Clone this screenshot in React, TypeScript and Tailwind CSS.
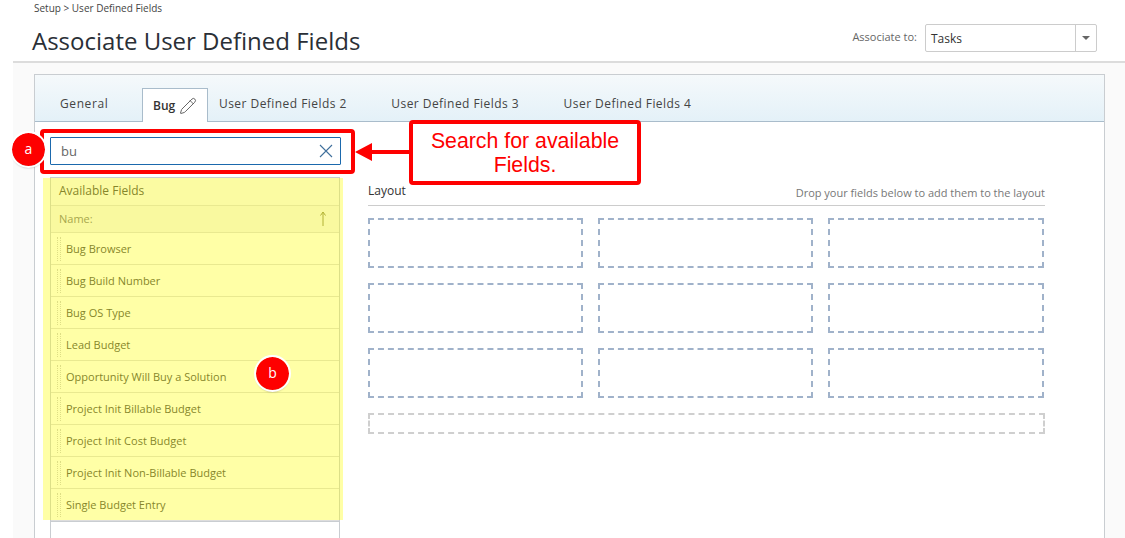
import { Pencil } from "lucide-react";

const FIELDS = [
  "Bug Browser",
  "Bug Build Number",
  "Bug OS Type",
  "Lead Budget",
  "Opportunity Will Buy a Solution",
  "Project Init Billable Budget",
  "Project Init Cost Budget",
  "Project Init Non-Billable Budget",
  "Single Budget Entry",
];

const TABS = ["User Defined Fields 2", "User Defined Fields 3", "User Defined Fields 4"];
const SLOTS = [0, 1, 2, 3, 4, 5, 6, 7, 8];

function Badge({ label, className }: { label: string; className: string }) {
  return (
    <div
      className={`absolute flex h-[33px] w-[33px] items-center justify-center rounded-full bg-[#fe0000] pb-[2px] text-[14px] text-white shadow-[0_2px_2px_rgba(0,0,0,0.3)] outline-2 outline-white ${className}`}
    >
      {label}
    </div>
  );
}

export default function App() {
  return (
    <div className="relative h-[538px] w-[1125px] overflow-hidden bg-white font-['Open_Sans',sans-serif] text-[#333]">
      <header className="ml-[13px] flex h-[63px] justify-between border-b-2 border-[#dcdcdc] pl-[19px] pr-[28px]">
        <div>
          <div className="ml-[2px] pt-[2px] text-[10px] leading-[13px] text-[#444]">Setup &gt; User Defined Fields</div>
          <h1 className="pt-[9px] text-[24px] leading-[33px] text-[#2a2f36]">Associate User Defined Fields</h1>
        </div>
        <div className="flex items-start pt-[24px]">
          <span className="mr-[8px] pt-[5px] text-[11px] leading-[15px] text-[#666]">Associate to:</span>
          <div className="flex h-[28px] w-[172px] rounded-[2px] border border-[#ccc] bg-white">
            <span className="flex-1 pl-[5px] pt-[5px] text-[12px] leading-[17px] text-[#333]">Tasks</span>
            <span className="flex w-[21px] items-center justify-center border-l border-[#ccc]">
              <span className="h-0 w-0 border-x-[4px] border-t-[4px] border-x-transparent border-t-[#666]" />
            </span>
          </div>
        </div>
      </header>

      <main className="ml-[13px] h-[475px] bg-[#fafafa] pl-[21px] pr-[20px] pt-[11px]">
        <div className="h-[470px] border border-[#c9cdd1] bg-white">
          <nav className="flex h-[47px] items-end border-b border-[#a9bccb] bg-gradient-to-b from-[#f5f9fb] to-[#e4f1f8] pl-[25px]">
            <span className="w-[82px] pb-[9px] text-[12px] leading-[17px] tracking-[0.6px] text-[#444]">General</span>
            <div className="relative top-px flex h-[34px] w-[66px] items-center gap-[4px] border border-b-0 border-[#a9bccb] bg-white pl-[10px]">
              <span className="text-[12px] font-semibold leading-[17px] text-[#333]">Bug</span>
              <Pencil size={18} strokeWidth={1.2} className="text-[#555]" />
            </div>
            {TABS.map((tab) => (
              <span key={tab} className="ml-[11px] w-[161.3px] pb-[9px] text-[12px] leading-[17px] tracking-[0.45px] text-[#444]">
                {tab}
              </span>
            ))}
          </nav>

          <div className="flex pl-[15px] pt-[15px]">
            <div className="w-[291px]">
              <div className="flex h-[28px] items-center justify-between rounded-[1px] border border-[#1b69ad] pl-[10px] pr-[7px]">
                <span className="text-[13px] leading-[18px] text-[#666]">bu</span>
                <svg width="14" height="14" viewBox="0 0 14 14" fill="none" stroke="#3f6f9c" strokeWidth="1.1">
                  <path d="M1 1l12 12M13 1L1 13" />
                </svg>
              </div>
              <div className="mt-[12px] w-[290px] border border-[#c9cdd1] bg-white">
                <div className="h-[28px] border-b border-[#ddd] bg-[#f9f9f9] pl-[8px] pt-[4px] text-[12px] leading-[17px] text-[#444]">
                  Available Fields
                </div>
                <div className="flex h-[27px] items-center justify-between border-b border-[#ddd] bg-[#f5f5f5] pb-[1px] pl-[8px] pr-[12px] text-[11px] leading-[15px] text-[#777]">
                  <span>Name:</span>
                  <svg width="8" height="16" viewBox="0 0 8 16" fill="none" stroke="#8a8a50" strokeWidth="1">
                    <path d="M4 15V1M1.5 4.5L4 1l2.5 3.5" />
                  </svg>
                </div>
                {FIELDS.map((field) => (
                  <div key={field} className="flex h-[32px] items-center border-b border-[#ddd] pl-[6px] last:h-[31px] last:border-b-0">
                    <span className="mr-[5px] h-[24px] w-[4px] border-x border-dotted border-[#ccc]" />
                    <span className="text-[11px] leading-[15px] text-[#444]">{field}</span>
                  </div>
                ))}
                <div className="h-[40px] border-t border-[#c9cdd1]" />
              </div>
            </div>

            <div className="ml-[27px] w-[677px]">
              <div className="mt-[46px] flex h-[23px] items-start justify-between border-b border-[#ccc]">
                <span className="text-[12px] leading-[16px] text-[#333]">Layout</span>
                <span className="pt-[2px] text-[11px] leading-[15px] text-[#777]">Drop your fields below to add them to the layout</span>
              </div>
              <div className="mt-[12px] grid grid-cols-[215px_215px_216px] gap-[15px]">
                {SLOTS.map((slot) => (
                  <div key={slot} className="h-[50px] border-2 border-dashed border-[#a0b2ca]" />
                ))}
              </div>
              <div className="mt-[15px] h-[21px] border-2 border-dashed border-[#cfcfcf]" />
            </div>
          </div>
        </div>
      </main>

      {/* annotations drawn over the screenshot */}
      <div className="absolute left-[43px] top-[178px] h-[342px] w-[300px] bg-[#ffff00]/35" />
      <div className="absolute left-[40px] top-[129px] h-[45px] w-[315px] rounded-[4px] border-[4px] border-[#fe0000]" />
      <Badge label="a" className="left-[12px] top-[133px]" />
      <Badge label="b" className="left-[256px] top-[357px]" />
      <svg className="absolute left-[355px] top-[143px]" width="56" height="18" viewBox="0 0 56 18" fill="#fe0000">
        <path d="M0 9L17 0v7h39v4H17v7z" />
      </svg>
      <div className="absolute left-[409px] top-[120px] flex h-[65px] w-[232px] items-center justify-center rounded-[4px] border-[4px] border-[#fe0000] bg-white text-center font-['Liberation_Sans',sans-serif] text-[21.3px] leading-[24px] text-[#fe0000]">
        Search for available
        <br />
        Fields.
      </div>
    </div>
  );
}
